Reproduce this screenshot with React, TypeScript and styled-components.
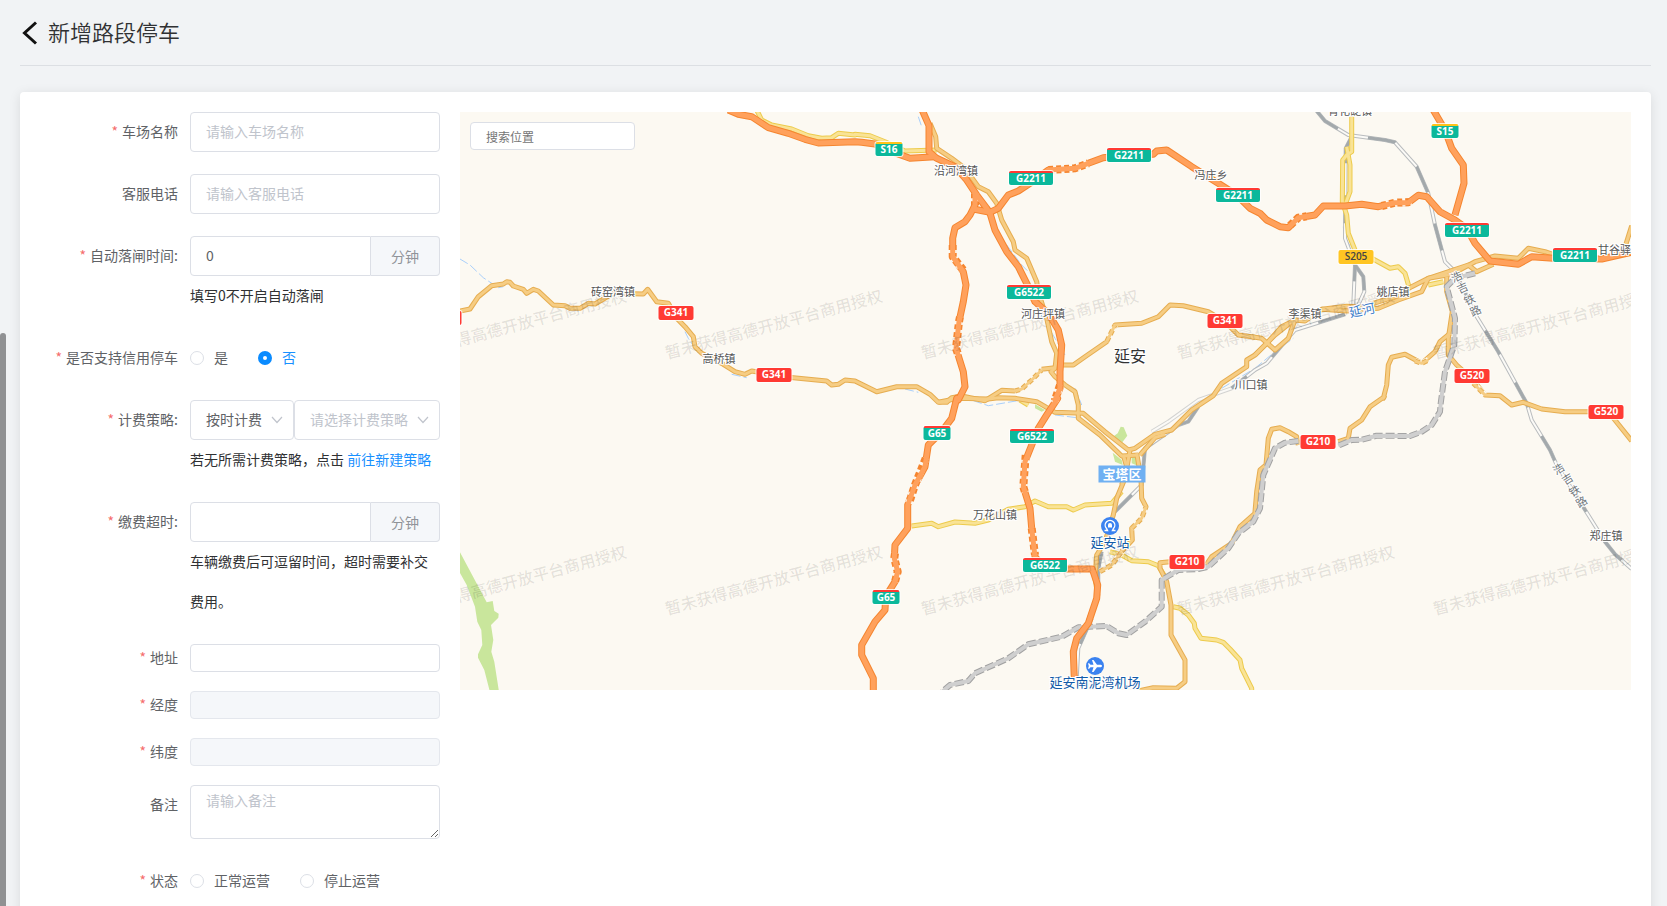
import React from 'react';
import styled, { createGlobalStyle, css } from 'styled-components';

const textFont = '"Open Sans", "Noto Sans CJK SC", sans-serif';

const GlobalStyle = createGlobalStyle`
  *, *::before, *::after { box-sizing: border-box; }
  body {
    margin: 0;
    background: #f1f3f5;
    color: #303133;
    font-family: "Noto Sans CJK SC", sans-serif;
    font-size: 14px;
  }
  button, input, select, textarea { font-family: inherit; font-size: 14px; }
`;

const Page = styled.main`
  position: relative;
  display: flex;
  flex-direction: column;
  height: 100vh;
  overflow: hidden;
  padding: 0 16px 0 20px;
`;

const ScrollThumb = styled.span`
  position: absolute;
  left: 0;
  top: 333px;
  bottom: 0;
  width: 6px;
  border-radius: 3px 3px 0 0;
  background: #909193;
`;

const Header = styled.header`
  display: flex;
  align-items: center;
  height: 66px;
  flex: none;
  border-bottom: 1px solid #dcdfe3;
`;

const BackButton = styled.button`
  display: flex;
  align-items: center;
  width: 28px;
  height: 28px;
  padding: 0;
  border: 0;
  background: none;
  color: #111;
  cursor: pointer;
`;

const Title = styled.h1`
  margin: 0;
  padding-bottom: 4px;
  font-size: 22px;
  line-height: 32px;
  font-weight: 350;
`;

const Card = styled.section`
  display: flex;
  flex: 1;
  gap: 20px;
  margin-top: 26px;
  padding: 20px 20px 0 0;
  border-radius: 4px 4px 0 0;
  background: #fff;
  box-shadow: 0 2px 12px rgba(0, 0, 0, 0.1);
`;

const Form = styled.form`
  width: 420px;
  flex: none;
`;

const Item = styled.div<{ $gap?: number }>`
  display: flex;
  margin-bottom: ${(p) => p.$gap ?? 22}px;
`;

const Label = styled.label<{ $required?: boolean; $small?: boolean }>`
  width: 170px;
  flex: none;
  padding-right: 12px;
  text-align: right;
  line-height: ${(p) => (p.$small ? 26 : 38)}px;
  color: #606266;
  ${(p) =>
    p.$required &&
    css`
      &::before {
        content: "*";
        margin-right: 4px;
        color: #f56c6c;
      }
    `}
`;

const Content = styled.div`
  flex: 1;
  min-width: 0;
`;

const Controls = styled.div`
  display: flex;
`;

const Input = styled.input<{ $small?: boolean; $joined?: boolean }>`
  display: block;
  flex: 1;
  width: 100%;
  min-width: 0;
  height: ${(p) => (p.$small ? 28 : 40)}px;
  padding: 0 15px 2px;
  border: 1px solid #dcdfe6;
  border-radius: ${(p) => (p.$joined ? '4px 0 0 4px' : '4px')};
  background: #fff;
  color: #606266;
  outline: 0;
  &::placeholder { color: #c0c4cc; opacity: 1; }
  &:disabled { background: #f5f7fa; border-color: #e4e7ed; }
`;

const Unit = styled.span`
  width: 69px;
  border: 1px solid #dcdfe6;
  border-left: 0;
  border-radius: 0 4px 4px 0;
  background: #f5f7fa;
  color: #909399;
  text-align: center;
  line-height: 38px;
  height: 40px;
`;

const Help = styled.p`
  margin: -1px 0 1px;
  line-height: 40px;
  color: #303133;
`;

const Link = styled.a`
  color: #1890ff;
  text-decoration: none;
`;

const SelectBox = styled.div<{ $grow?: boolean }>`
  position: relative;
  flex: ${(p) => (p.$grow ? '1' : '0 0 104px')};
`;

const Select = styled.select<{ $empty?: boolean }>`
  width: 100%;
  height: 40px;
  padding: 0 28px 2px 15px;
  border: 1px solid #dcdfe6;
  border-radius: 4px;
  background: #fff;
  color: ${(p) => (p.$empty ? '#c0c4cc' : '#606266')};
  appearance: none;
  outline: 0;
`;

const Chevron = styled.svg`
  position: absolute;
  right: 11px;
  top: 16px;
  width: 12px;
  height: 8px;
  pointer-events: none;
`;

const Radios = styled.div`
  display: flex;
  align-items: center;
  gap: 30px;
  height: 40px;
`;

const RadioLabel = styled.label`
  display: flex;
  align-items: center;
  gap: 10px;
  color: #606266;
  &:has(input:checked) { color: #1890ff; }
`;

const RadioText = styled.span`
  padding-bottom: 2px;
`;

const Radio = styled.input`
  appearance: none;
  width: 14px;
  height: 14px;
  margin: 0;
  border: 1px solid #dcdfe6;
  border-radius: 50%;
  background: #fff;
  &:checked { border: 5px solid #0a8bff; }
`;

const TextArea = styled.textarea`
  display: block;
  width: 100%;
  height: 54px;
  padding: 4px 15px 6px;
  border: 1px solid #dcdfe6;
  border-radius: 4px;
  color: #606266;
  line-height: 21px;
  resize: vertical;
  outline: 0;
  &::placeholder { color: #c0c4cc; opacity: 1; }
`;

const MapView = styled.section`
  position: relative;
  flex: 1;
  min-width: 0;
  height: 578px;
  overflow: hidden;
  background: #fcf9f2;
`;

const Drawing = styled.svg`
  display: block;
  width: 1171px;
  height: 578px;
`;

const SearchBox = styled.input`
  position: absolute;
  left: 10px;
  top: 10px;
  width: 165px;
  height: 28px;
  padding: 0 15px;
  border: 1px solid #dcdfe6;
  border-radius: 4px;
  background: #fff;
  font-size: 12px;
  outline: 0;
  &::placeholder { color: #757575; opacity: 1; }
`;

const Pin = styled.span<{ $x: number; $y: number; $turn?: number }>`
  position: absolute;
  left: ${(p) => p.$x}px;
  top: ${(p) => p.$y}px;
  transform: translate(-50%, -50%) rotate(${(p) => p.$turn ?? 0}deg);
  white-space: nowrap;
`;

const halo = css`
  text-shadow: 1px 0 #fff, -1px 0 #fff, 0 1px #fff, 0 -1px #fff, 1px 1px #fff,
    -1px -1px #fff, 1px -1px #fff, -1px 1px #fff;
`;

const Place = styled(Pin)<{ $size?: number; $color?: string }>`
  font-size: ${(p) => p.$size ?? 11}px;
  line-height: 16px;
  color: ${(p) => p.$color ?? '#555'};
  ${halo}
`;

const District = styled(Pin)`
  width: 47px;
  height: 17px;
  background: #6fb0f2;
  color: #fff;
  font-size: 13px;
  font-weight: 700;
  line-height: 16px;
  text-align: center;
`;

type Kind = 'national' | 'provincial' | 'red' | 'yellow';

const Shield = styled(Pin)<{ $kind: Kind; $w: number }>`
  width: ${(p) => p.$w}px;
  height: 14px;
  border-radius: 2px;
  box-shadow: 0 0 0 1px rgba(255, 255, 255, 0.8);
  border-top: ${(p) => (p.$kind === 'national' ? '2px solid #ff3a33' : p.$kind === 'provincial' ? '2px solid #ffc31a' : '0')};
  background: ${(p) => (p.$kind === 'red' ? '#ff3a33' : p.$kind === 'yellow' ? '#ffc522' : '#0bb89b')};
  color: ${(p) => (p.$kind === 'yellow' ? '#444' : '#fff')};
  font-family: ${textFont};
  font-size: 10px;
  font-weight: ${(p) => (p.$kind === 'yellow' ? 600 : 700)};
  line-height: ${(p) => (p.$kind === 'red' || p.$kind === 'yellow' ? 13 : 10)}px;
  text-align: center;
`;

/* Map geometry is stored per sheet, three units to the pixel. */
const sheets: Record<string, [number, number]> = {
  A: [-5, -7], B: [395, -7], C: [795, -7],
  D: [-5, 283], E: [395, 283], F: [795, 283],
};

function trace(source: string): string {
  let origin = sheets.A;
  let command = 'M';
  return source.trim().split(/\s+/).map((token) => {
    if (token in sheets) {
      origin = sheets[token];
      return '';
    }
    if (token === 'Z') return 'Z';
    const [x, y] = token.split(',').map(Number);
    const out = `${command}${(origin[0] + x / 3).toFixed(1)} ${(origin[1] + y / 3).toFixed(1)}`;
    command = 'L';
    return out;
  }).join('');
}

const expressways = [
  'A 820,15 850,28 890,35 940,68 1000,85 1050,103 1090,114 1200,110 B 20,112 60,117 110,140 165,160 240,155',
  'B 200,12 222,62 222,140 245,160 300,185 335,225 365,270 395,310 405,325 420,375 455,440 490,485 515,535 540,590 580,625 610,675 620,720 615,800 615,850 600,885 E 608,10 575,60 550,100 530,150 510,200 505,275 525,340 530,400 540,485 560,510 635,522 712,522 728,570 725,610 700,685 665,730 655,770 658,850',
  'B 360,265 360,300 345,330 330,350 300,368 293,400 293,455 325,500 333,540 325,590 312,650 303,730 325,800 330,845 310,885 E 305,10 290,70 260,110 220,150 210,215 180,270 158,330 158,400 120,450 118,490 128,530 120,560 92,605 90,645 60,680 20,750 20,780 55,850 55,895',
  'B 355,312 405,322 430,310 460,270 490,258 525,235 580,195 660,190 700,175 745,158 820,150 895,148 905,138 935,135 1010,185 1090,235 1145,270 1185,310 C 15,325 35,345 75,365 100,368 130,338 180,330 205,303 270,303 320,298 370,305 420,293 460,293 490,271 515,275 555,320 600,345 635,370 660,415 705,468 790,478 830,455 895,460 1040,462 1128,442',
  'C 533,12 570,75 590,130 625,180 627,235 600,330',
];

const tunnels = [
  'B 580,195 660,190 700,175',
  'C 380,303 420,293 470,291',
  'C 105,362 130,338 155,334',
  'B 293,420 293,455 325,495',
  'B 315,635 312,650 303,730 310,750',
  'B 360,265 360,300',
  'E 212,190 180,270 162,325',
  'E 512,180 505,275 510,292',
  'E 530,400 540,480',
  'B 615,840 600,885 E 600,10',
  'E 120,475 118,490 128,530 120,560',
];

const mainRoads = [
  'A 15,618 45,612 70,575 110,542 145,537 155,530 165,532 175,543 205,553 215,565 235,553 250,558 295,600 330,602 345,610 375,610 400,595 420,597 440,585 475,565 565,567 578,553 605,590 640,595 665,640 690,665 715,695 720,725 740,745 805,778 840,800 870,808 890,798 1000,817 1115,828 1130,840 1150,838 1170,825 1200,828 B 0,828 65,860 125,845 185,845 225,868 250,892 275,892 290,878 320,873 390,887 440,856 480,858',
  'B 250,892 310,880 E 400,12 430,8 480,10 545,20 600,52 685,55 750,110 820,165 840,160 900,118 950,105 1010,45 1075,2 B 1100,835 1175,785 1175,765 1200,750 C 40,710 80,665 120,645',
  'C 0,750 60,690 110,650 C 120,645 150,648 200,613 275,618 370,610 430,585 500,560 520,520 590,508 660,470 720,453 790,460 820,430 870,440 900,450',
  'C 200,613 275,604 320,606 420,575 470,545 520,520 C 640,480 665,500 715,478',
  'C -10,695 20,700 60,735 100,700 120,645',
  'B 225,55 242,95 245,130 290,160 330,190 370,245 400,260 425,295 440,345 475,410 480,435 515,460 545,530 550,560 575,640 590,710 605,745 600,790 588,800 600,815 630,840 660,860 670,900 E 670,70 735,120 800,183 850,180',
  'B 620,780 655,780 690,755 755,710 780,660 860,655 910,635 945,600 985,602 1060,620 1110,650 1150,690 1200,697',
  'B 560,793 600,788',
  'E 825,165 810,250 785,310 775,360 750,440 725,480 720,550 728,600 700,680',
  'E 805,180 815,215 800,270',
  'E 845,175 858,250 860,310 873,335 860,370 830,400 832,435 790,480 770,510 735,530',
  'E 945,500 915,503 915,520 935,560 948,630 948,720 990,795 990,860 965,880 895,878 850,888',
  'C 575,515 575,560 592,620 580,700 580,750 605,780 650,820 690,870 735,872 F 770,30 805,22 860,42 930,50 1000,50 1060,50 1130,138',
  'C 585,685 555,710 540,740 500,775 450,748 410,757 400,780 395,840 385,880 F 388,5 345,35 320,75 285,100 280,130 250,140',
  'F 130,150 125,125 100,110 75,98 50,103 40,130 33,210 15,225 5,290 0,350 E 1200,355 1155,395 1130,445 1070,485 1050,515',
  'C 1112,420 1130,362',
  'E 855,180 900,128 930,118',
];

const roughRoads = [
  'B 480,858 500,852 530,825 560,795',
  'B 755,710 780,660',
  'E 830,400 860,370 873,335',
  'E 735,530 770,510 800,470',
  'C 480,768 500,775 520,765',
  'C 655,835 690,870',
];

const lightRoads = [
  'A 905,15 920,45 950,60 1010,72 1060,92 1100,100 1130,98 1150,85 1200,90 B 0,88 45,92 90,110 150,138 245,135',
  'C 290,35 290,140 275,150 263,165 262,290 275,330 280,385 300,435',
  'C 275,125 285,180 285,260 270,300',
  'C 350,460 405,490 430,485 450,505 462,545',
  'C 520,540 565,530',
  'E 170,393 230,385 250,395 300,381 360,385 400,375 460,343 510,335 540,318 580,335 635,335 655,345 690,330 770,325 800,290',
  'E 765,470 800,480 830,497 880,500 910,512 930,545',
  'E 955,635 975,640 1000,660 1018,685 1020,700 1038,730 1085,735 1105,742 1125,762 1155,795 1160,820 1190,880 1190,895',
  'E 495,15 520,30',
];

const railways = [
  'C 185,18 210,48 280,90 390,105 420,112 485,185 520,265 540,360 570,470 600,500 665,635 730,740 815,895 F 830,75 885,165 905,210 1000,360 1050,440 1080,478 1130,522',
  'C 290,95 272,130 270,400 300,480 295,600',
  'C 300,480 325,515 328,560 310,600',
  'C 270,628 120,675 35,775 0,795 B 1130,850',
  'E 1030,35 1000,80 970,90 870,160 860,270 780,350',
  'E 740,470 730,520 730,570',
  'E 710,670 670,760 665,850',
];

const sidings = ['E 890,110 940,80 1030,15 B 1130,850'];

const freight = [
  'C 660,505 600,520 575,545 600,640 598,720 570,800 557,895 F 555,50 530,90 500,110 465,123 365,122 320,134 290,135 250,152',
  'F 130,138 90,143 60,160 25,240 15,340 -5,380 E 1150,415 1120,460 1060,515 1030,522 970,525 920,555 920,635 870,680 815,720 790,715 755,693 670,697 620,725 520,748 460,790 360,835 340,858 285,870 262,890',
];

const streams = [
  'A 15,462 45,480 85,518 130,548 145,545',
  'A 345,615 375,618',
  'A 690,680 700,700 730,745',
  'A 830,808 875,818',
  'B 190,35 200,65',
  'B 455,420 500,480 525,505',
  'B 535,590 600,700 630,750',
  'B 150,852 190,862',
  'C 265,365 270,400 290,430',
  'C 0,790 60,740 115,700',
  'B 1100,850 1200,790',
  'E 320,5 400,32 500,15',
  'E 600,60 680,70',
  'B 660,850 680,900',
];

const parks = [
  'D 10,462 95,622 113,618 118,648 131,656 130,668 108,690 115,735 109,770 118,800 132,890 104,888 88,825 69,788 69,778 82,750 79,705 67,680 60,635 35,570 10,525 Z',
  'E 797,95 806,97 817,122 802,142 780,130 778,122 788,115 Z',
  'E 773,173 800,195 803,210 780,200 Z',
  'E 830,185 850,180 855,215 830,205 Z',
  'E 540,28 570,45 560,50 540,40 Z',
];

const marks = [-49, 207, 463, 719, 975].flatMap((x) => [[x, 247], [x, 503]]);

const shields: [string, Kind, number, number][] = [
  ['S16', 'provincial', 429, 37],
  ['G2211', 'national', 571, 66],
  ['G2211', 'national', 669, 43],
  ['G2211', 'national', 778, 83],
  ['G6522', 'national', 569, 180],
  ['G341', 'red', 765, 209],
  ['G341', 'red', 216, 201],
  ['G341', 'red', 314, 263],
  ['G341', 'red', -16, 206],
  ['S15', 'provincial', 985, 19],
  ['G2211', 'national', 1007, 118],
  ['G2211', 'national', 1115, 143],
  ['S205', 'yellow', 896, 145],
  ['G520', 'red', 1012, 264],
  ['G65', 'national', 477, 321],
  ['G6522', 'national', 572, 324],
  ['G6522', 'national', 585, 453],
  ['G65', 'national', 426, 485],
  ['G210', 'red', 727, 450],
  ['G210', 'red', 858, 330],
  ['G520', 'red', 1146, 300],
];

const shieldWidth: Record<number, number> = { 3: 27, 4: 35, 5: 44 };

const places: [string, number, number][] = [
  ['砖窑湾镇', 153, 179],
  ['沿河湾镇', 496, 58],
  ['冯庄乡', 751, 62],
  ['河庄坪镇', 583, 201],
  ['高桥镇', 259, 246],
  ['川口镇', 791, 272],
  ['姚店镇', 933, 179],
  ['李渠镇', 845, 201],
  ['甘谷驿镇', 1160, 137],
  ['青化砭镇', 890, -2],
  ['万花山镇', 535, 402],
  ['郑庄镇', 1146, 423],
];

const railName: [string, number, number, number][] = [
  ['浩', 996, 164, -25], ['吉', 1002, 175, -25], ['铁', 1009, 187, -25], ['路', 1015, 198, -25],
  ['浩', 1098, 356, -32], ['吉', 1107, 366, -32], ['铁', 1114, 378, -32], ['路', 1121, 389, -32],
];

interface LinesProps {
  paths: string[];
  color: string;
  width: number;
  dash?: string;
}

const Lines = ({ paths, color, width, dash }: LinesProps) => (
  <g fill="none" stroke={color} strokeWidth={width} strokeDasharray={dash} strokeLinejoin="round">
    {paths.map((p) => <path key={p} d={trace(p)} />)}
  </g>
);

const RoadMap = () => (
  <MapView aria-label="地图">
    <Drawing viewBox="0 0 1171 578" aria-hidden="true">
      <g fill="#c9e69c">{parks.map((p) => <path key={p} d={trace(p)} />)}</g>
      <Lines paths={streams} color="#a9cffa" width={1} dash="9 3" />
      <Lines paths={sidings} color="#d3d3d1" width={4} />
      <Lines paths={sidings} color="#fbfaf7" width={2} />
      <Lines paths={railways} color="#b9bcbe" width={4} />
      <Lines paths={railways} color="#fbfaf7" width={2} />
      <Lines paths={railways} color="#a3a9ac" width={3} dash="28 32" />
      <Lines paths={lightRoads} color="#edcb4c" width={5} />
      <Lines paths={lightRoads} color="#f9e396" width={3} />
      <Lines paths={mainRoads} color="#e6ad50" width={5} />
      <Lines paths={mainRoads} color="#f6cd84" width={3} />
      <Lines paths={roughRoads} color="#fcf9f2" width={6} />
      <Lines paths={roughRoads} color="#e6ad50" width={5} dash="5 3" />
      <Lines paths={roughRoads} color="#f6cd84" width={3} />
      <Lines paths={freight} color="#a2a2a2" width={6} dash="9 3" />
      <Lines paths={freight} color="#cfcfcf" width={4} />
      <Lines paths={expressways} color="#f5852f" width={7} />
      <Lines paths={tunnels} color="#fcf9f2" width={8} />
      <Lines paths={tunnels} color="#f5852f" width={8} dash="5 3" />
      <Lines paths={expressways} color="#ffa15c" width={5} />
      <g fill="#000" fillOpacity="0.1" fontSize="16" fontWeight="500">
        {marks.map(([x, y]) => (
          <text key={`${x} ${y}`} x={x} y={y} transform={`rotate(-15 ${x} ${y})`}>
            暂未获得高德开放平台商用授权
          </text>
        ))}
      </g>
      <g transform="translate(650 414)">
        <circle r="9" fill="#3b82f0" />
        <path d="M-5.500 4.500H-2.500L-3.500 2.500A4.800 4.800 0 1 1 3.500 2.500L2.500 4.500H5.500" fill="none" stroke="#fff" strokeWidth="1.400" />
        <path d="M-2 1.500V-1A2 2 0 0 1 2 -1V1.500Z" fill="#fff" />
      </g>
      <g transform="translate(635 554)">
        <circle r="9" fill="#3b82f0" />
        <path d="M7 0C7-1 6-1.200 5-1.200H2L-1.500-6H-3L-1.500-1.200H-4.500L-5.800-2.800H-7L-6.200 0L-7 2.800H-5.800L-4.500 1.200H-1.500L-3 6H-1.500L2 1.200H5C6 1.200 7 1 7 0Z" fill="#fff" />
      </g>
    </Drawing>
    {places.map(([name, x, y]) => <Place key={name} $x={x} $y={y}>{name}</Place>)}
    {railName.map(([char, x, y, turn]) => (
      <Place key={`${x}`} $x={x} $y={y} $turn={turn} $color="#70767a">{char}</Place>
    ))}
    <Place $x={670} $y={243} $size={16} $color="#333">延安</Place>
    <Place $x={902} $y={198} $size={13} $turn={-12} $color="#3c7cc8">延河</Place>
    <Place $x={650} $y={430} $size={13} $color="#125ba8">延安站</Place>
    <Place $x={635} $y={570} $size={13} $color="#125ba8">延安南泥湾机场</Place>
    <District $x={662} $y={362}>宝塔区</District>
    {shields.map(([name, kind, x, y]) => (
      <Shield key={`${x}`} $kind={kind} $w={shieldWidth[name.length]} $x={x} $y={y}>{name}</Shield>
    ))}
    <SearchBox type="text" placeholder="搜索位置" aria-label="搜索位置" />
  </MapView>
);

const Arrow = () => (
  <Chevron viewBox="0 0 12 8" aria-hidden="true">
    <path d="M1 1L6 6.500L11 1" fill="none" stroke="#c0c4cc" strokeWidth="1.200" />
  </Chevron>
);

interface OptionProps {
  name: string;
  text: string;
  checked?: boolean;
}

const Option = ({ name, text, checked }: OptionProps) => (
  <RadioLabel>
    <Radio type="radio" name={name} defaultChecked={checked} />
    <RadioText>{text}</RadioText>
  </RadioLabel>
);

export default function App() {
  return (
    <>
      <GlobalStyle />
      <Page>
        <ScrollThumb />
        <Header>
          <BackButton type="button" aria-label="返回">
            <svg width="18" height="24" viewBox="0 0 18 24" aria-hidden="true">
              <path d="M16 1.500L4.500 12L16 22.500" fill="none" stroke="currentColor" strokeWidth="3" />
            </svg>
          </BackButton>
          <Title>新增路段停车</Title>
        </Header>
        <Card>
          <Form>
            <Item>
              <Label htmlFor="name" $required>车场名称</Label>
              <Content><Input id="name" placeholder="请输入车场名称" /></Content>
            </Item>
            <Item>
              <Label htmlFor="phone">客服电话</Label>
              <Content><Input id="phone" placeholder="请输入客服电话" /></Content>
            </Item>
            <Item>
              <Label htmlFor="gate" $required>自动落闸时间:</Label>
              <Content>
                <Controls>
                  <Input id="gate" defaultValue="0" $joined />
                  <Unit>分钟</Unit>
                </Controls>
                <Help>填写0不开启自动落闸</Help>
              </Content>
            </Item>
            <Item role="radiogroup" aria-labelledby="credit-label">
              <Label as="span" id="credit-label" $required>是否支持信用停车</Label>
              <Radios>
                <Option name="credit" text="是" />
                <Option name="credit" text="否" checked />
              </Radios>
            </Item>
            <Item>
              <Label htmlFor="policy-type" $required>计费策略:</Label>
              <Content>
                <Controls>
                  <SelectBox>
                    <Select id="policy-type"><option>按时计费</option></Select>
                    <Arrow />
                  </SelectBox>
                  <SelectBox $grow>
                    <Select aria-label="计费策略" $empty><option>请选择计费策略</option></Select>
                    <Arrow />
                  </SelectBox>
                </Controls>
                <Help>若无所需计费策略，点击 <Link href="#new-policy">前往新建策略</Link></Help>
              </Content>
            </Item>
            <Item>
              <Label htmlFor="timeout" $required>缴费超时:</Label>
              <Content>
                <Controls>
                  <Input id="timeout" $joined />
                  <Unit>分钟</Unit>
                </Controls>
                <Help>车辆缴费后可逗留时间，超时需要补交费用。</Help>
              </Content>
            </Item>
            <Item $gap={19}>
              <Label htmlFor="address" $required $small>地址</Label>
              <Content><Input id="address" $small /></Content>
            </Item>
            <Item $gap={19}>
              <Label htmlFor="longitude" $required $small>经度</Label>
              <Content><Input id="longitude" $small disabled /></Content>
            </Item>
            <Item $gap={19}>
              <Label htmlFor="latitude" $required $small>纬度</Label>
              <Content><Input id="latitude" $small disabled /></Content>
            </Item>
            <Item>
              <Label htmlFor="remark">备注</Label>
              <Content><TextArea id="remark" placeholder="请输入备注" /></Content>
            </Item>
            <Item role="radiogroup" aria-labelledby="status-label">
              <Label as="span" id="status-label" $required>状态</Label>
              <Radios>
                <Option name="status" text="正常运营" />
                <Option name="status" text="停止运营" />
              </Radios>
            </Item>
          </Form>
          <RoadMap />
        </Card>
      </Page>
    </>
  );
}
